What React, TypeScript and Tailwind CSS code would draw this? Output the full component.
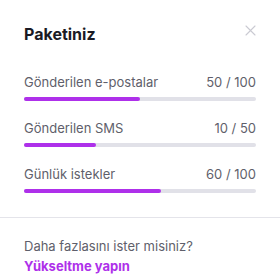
import React from "react";

const usage = [
  { label: "Gönderilen e-postalar", used: "50 / 100", pct: 50 },
  { label: "Gönderilen SMS", used: "10 / 50", pct: 31 },
  { label: "Günlük istekler", used: "60 / 100", pct: 59 },
];

export default function App() {
  return (
    <div
      className="w-[280px] h-[280px] bg-white overflow-hidden"
      style={{ fontFamily: "Inter, 'Noto Sans', sans-serif" }}
    >
      <div className="px-6 pt-6">
        <div className="flex items-center justify-between">
          <h2 className="text-base font-bold text-[#1a1a24] leading-5">Paketiniz</h2>
          <svg width="11" height="11" viewBox="0 0 11 11" className="-mt-2 text-[#cacad2]">
            <path d="M1 1l9 9M10 1l-9 9" stroke="currentColor" strokeWidth="1.1" strokeLinecap="round" />
          </svg>
        </div>

        <div className="mt-[28px] flex flex-col gap-[17px]">
          {usage.map((u) => (
            <div key={u.label}>
              <div className="flex items-center justify-between text-[13px] leading-5 text-[#5f5f6b]">
                <span>{u.label}</span>
                <span>{u.used}</span>
              </div>
              <div className="mt-[5px] h-[4px] rounded-full bg-[#e1e1e8]">
                <div className="h-full rounded-full bg-[#ae30ea]" style={{ width: `${u.pct}%` }} />
              </div>
            </div>
          ))}
        </div>
      </div>

      <div className="mt-[24px] border-t border-[#e4e4ea]" />

      <div className="px-6 pt-[18px]">
        <p className="text-[13px] leading-5 text-[#5f5f6b]">Daha fazlasını ister misiniz?</p>
        <p className="text-[13px] leading-5 font-bold text-[#ae30ea]">Yükseltme yapın</p>
      </div>
    </div>
  );
}
